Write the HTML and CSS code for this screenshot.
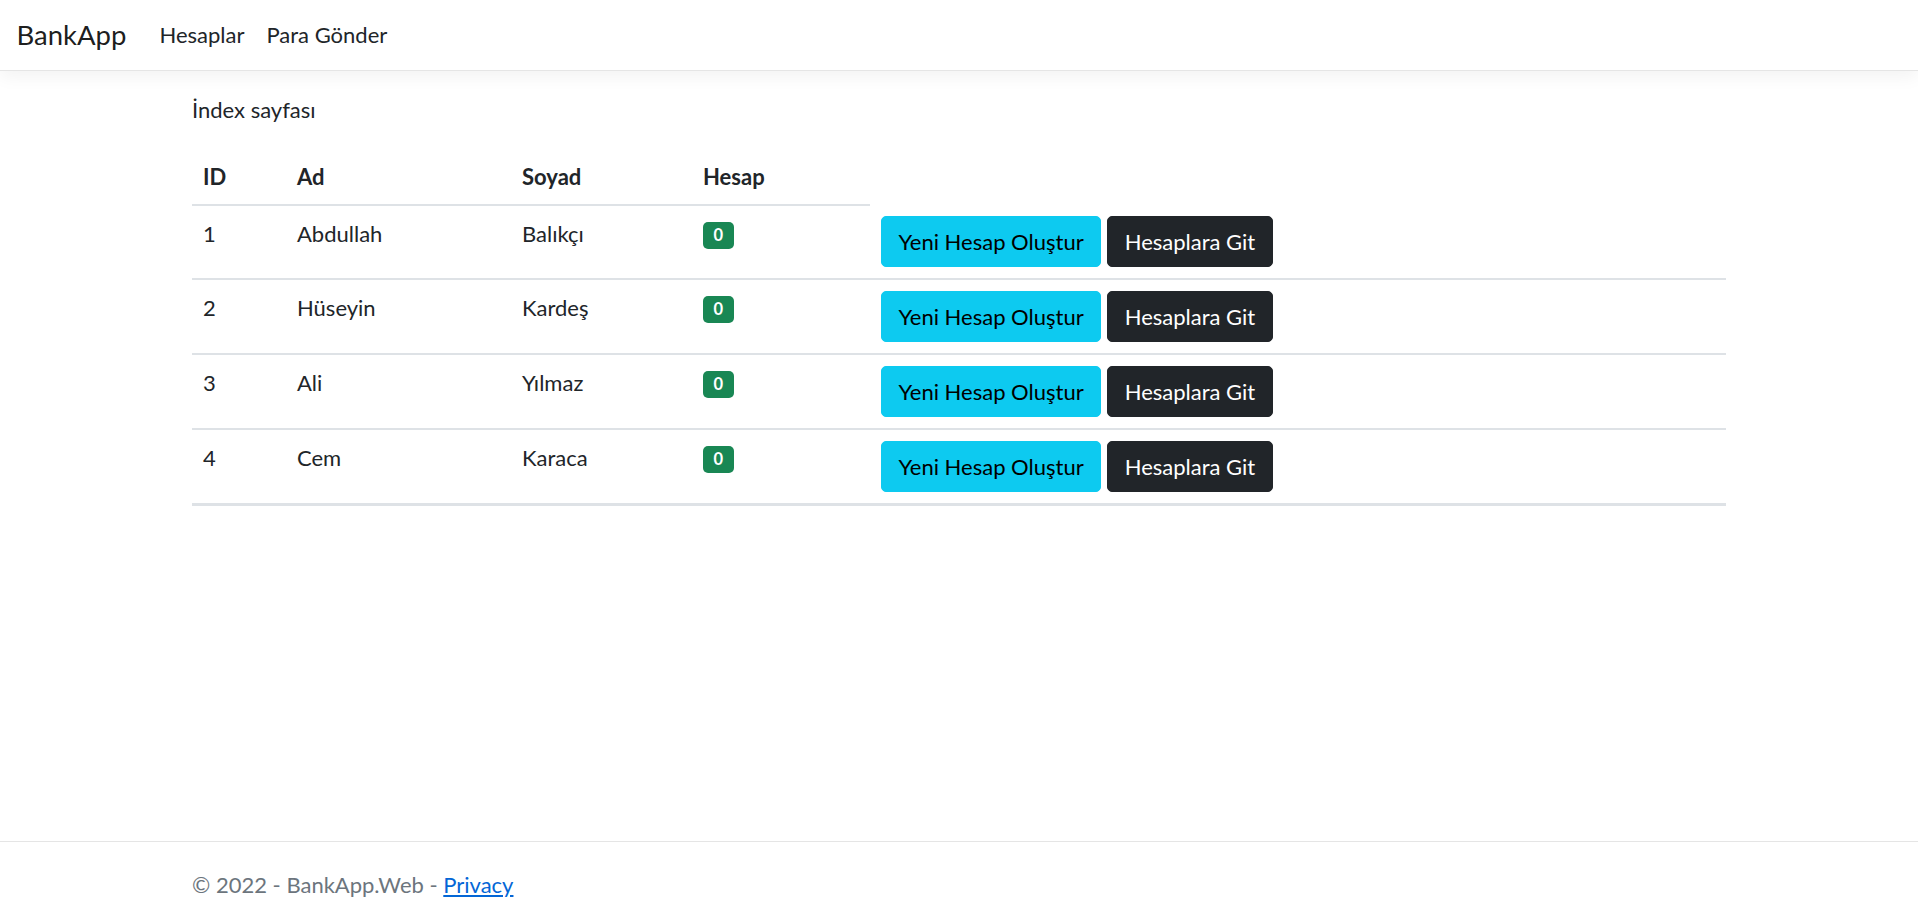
FILE: index.html
```html
<!DOCTYPE html>
<html lang="tr">
<head>
<meta charset="utf-8">
<title>BankApp</title>
<link rel="stylesheet" href="styles.css">
</head>
<body>
<header class="navbar">
  <a class="brand" href="#">BankApp</a>
  <ul class="nav">
    <li><a class="nav-link" href="#">Hesaplar</a></li>
    <li><a class="nav-link" href="#">Para Gönder</a></li>
  </ul>
</header>
<div class="container">
  <main class="main">
    <p class="intro">İndex sayfası</p>
    <table class="table">
      <colgroup>
        <col class="c-id"><col class="c-ad"><col class="c-soyad"><col class="c-hesap"><col class="c-act">
      </colgroup>
      <thead>
        <tr><th>ID</th><th>Ad</th><th>Soyad</th><th>Hesap</th></tr>
      </thead>
      <tbody>
        <tr>
          <td>1</td><td>Abdullah</td><td>Balıkçı</td>
          <td><span class="badge">0</span></td>
          <td><div class="actions"><a class="btn btn-info" href="#">Yeni Hesap Oluştur</a><a class="btn btn-dark" href="#">Hesaplara Git</a></div></td>
        </tr>
        <tr>
          <td>2</td><td>Hüseyin</td><td>Kardeş</td>
          <td><span class="badge">0</span></td>
          <td><div class="actions"><a class="btn btn-info" href="#">Yeni Hesap Oluştur</a><a class="btn btn-dark" href="#">Hesaplara Git</a></div></td>
        </tr>
        <tr>
          <td>3</td><td>Ali</td><td>Yılmaz</td>
          <td><span class="badge">0</span></td>
          <td><div class="actions"><a class="btn btn-info" href="#">Yeni Hesap Oluştur</a><a class="btn btn-dark" href="#">Hesaplara Git</a></div></td>
        </tr>
        <tr class="last">
          <td>4</td><td>Cem</td><td>Karaca</td>
          <td><span class="badge">0</span></td>
          <td><div class="actions"><a class="btn btn-info" href="#">Yeni Hesap Oluştur</a><a class="btn btn-dark" href="#">Hesaplara Git</a></div></td>
        </tr>
      </tbody>
    </table>
  </main>
</div>
<footer class="footer">
  <div class="container footer-inner">© 2022 - BankApp.Web - <a class="privacy" href="#">Privacy</a></div>
</footer>
</body>
</html>
```
FILE: styles.css
```css
* { box-sizing: border-box; }

html, body { margin: 0; padding: 0; }

body {
  font-family: Lato, "Segoe UI", "Liberation Sans", sans-serif;
  font-size: 22px;
  line-height: 33px;
  color: #212529;
  background: #fff;
  min-height: 915px;
  display: flex;
  flex-direction: column;
}

a { text-decoration: none; color: inherit; }

.navbar {
  height: 71px;
  display: flex;
  align-items: center;
  padding: 0 16.5px 2px;
  background: #fff;
  border-bottom: 1px solid #e5e5e5;
  box-shadow: 0 5.5px 16.5px rgba(0, 0, 0, 0.05);
  margin-bottom: 22px;
}

.brand {
  font-size: 27.5px;
  line-height: 41px;
  margin-right: 22px;
  color: rgba(0, 0, 0, 0.9);
}

.nav {
  display: flex;
  list-style: none;
  margin: 0;
  padding: 0;
}

.nav-link {
  display: block;
  padding: 0 11px;
  color: #212529;
}

.container {
  width: 1534px;
  margin: 0 auto;
}

.intro {
  margin: 0 0 23px;
}

.table {
  width: 1534px;
  border-collapse: collapse;
  table-layout: fixed;
}

.c-id { width: 94px; }
.c-ad { width: 225px; }
.c-soyad { width: 181px; }
.c-hesap { width: 178px; }

.table th,
.table td {
  padding: 11px;
  text-align: left;
  vertical-align: top;
}

.table th {
  font-weight: 700;
  border-bottom: 2px solid #dee2e6;
}

.table tbody td {
  border-bottom: 2px solid #dee2e6;
}

.table tbody tr.last td {
  border-bottom-width: 3px;
}

.badge {
  display: inline-block;
  background: #198754;
  color: #fff;
  font-size: 16.5px;
  font-weight: 700;
  line-height: 1;
  padding: 5.5px 10.5px;
  border-radius: 5px;
  vertical-align: 1px;
}

.actions {
  display: flex;
  gap: 6px;
}

.btn {
  display: inline-block;
  height: 51px;
  line-height: 49px;
  padding: 0 16.5px;
  border: 1px solid transparent;
  border-radius: 5px;
  font-size: 22px;
}

.btn-info {
  background: #0dcaf0;
  border-color: #0dcaf0;
  color: #000;
}

.btn-dark {
  background: #212529;
  border-color: #212529;
  color: #fff;
}

.footer {
  margin-top: auto;
  height: 74px;
  border-top: 1px solid #e5e5e5;
  color: #6c757d;
  white-space: nowrap;
}

.footer-inner {
  padding-top: 26px;
}

.privacy {
  color: #0366d6;
  text-decoration: underline;
}
```
